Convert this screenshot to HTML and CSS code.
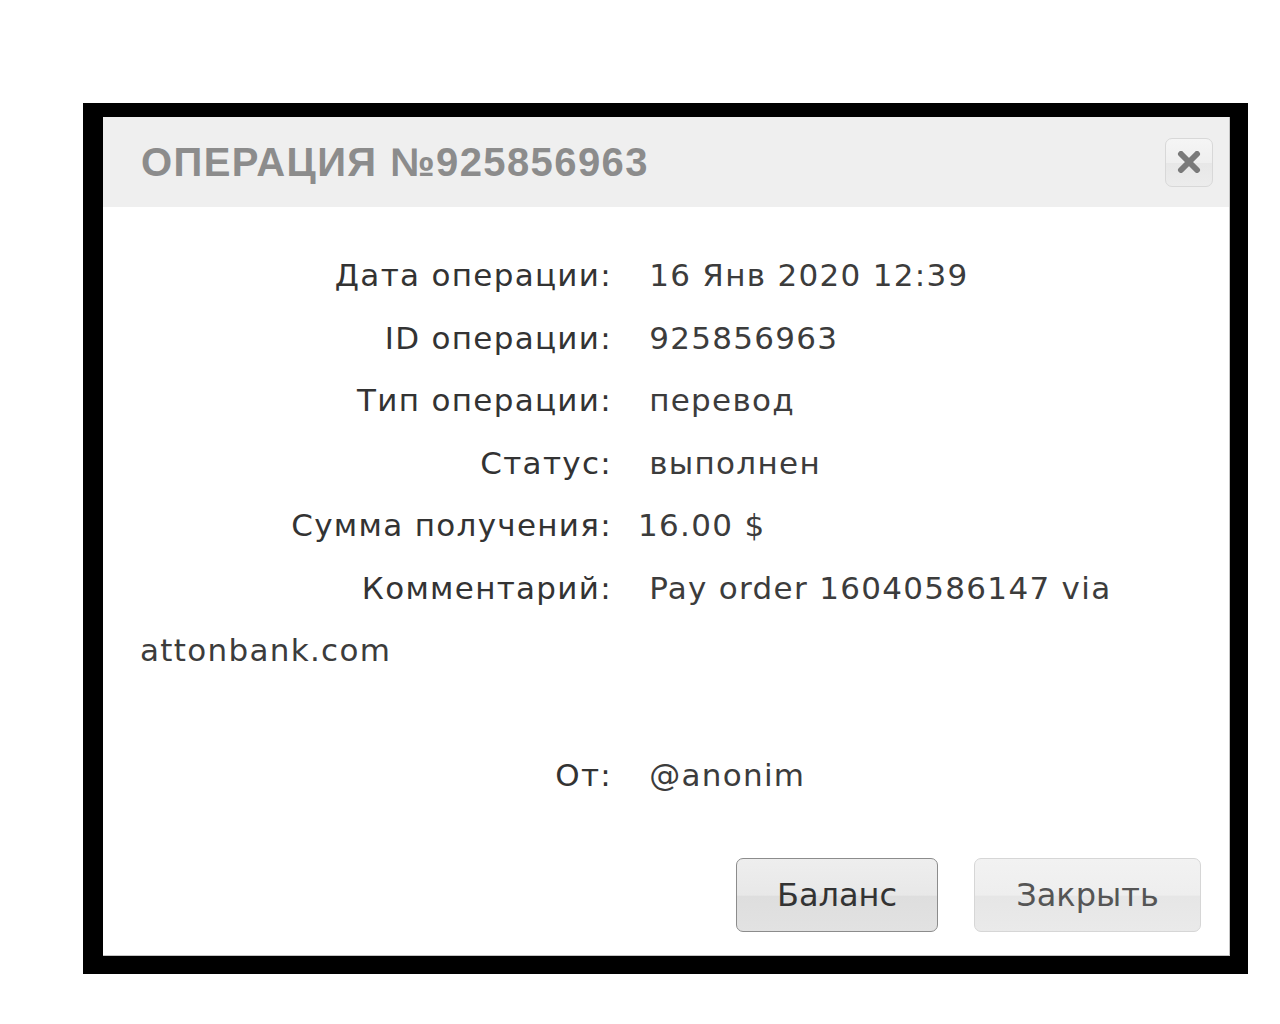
FILE: index.html
```html
<!DOCTYPE html>
<html lang="ru">
<head>
    <meta charset="UTF-8">
    <title>Операция №925856963</title>
    <link rel="stylesheet" href="styles.css">
</head>
<body>
  <div class="frame">
    <div class="dialog">
      <div class="dialog-head">
        <h2>ОПЕРАЦИЯ №925856963</h2>
        <button class="close-btn" title="Закрыть">
          <svg width="24" height="22" viewBox="0 0 24 22">
            <path d="M4 3 L20 19 M20 3 L4 19" stroke="#7a7a7a" stroke-width="6" stroke-linecap="round"/>
          </svg>
        </button>
      </div>

      <div class="dialog-body">
        <div class="row"><span class="label">Дата операции:</span> <span class="value">16 Янв 2020 12:39</span></div>
        <div class="row"><span class="label">ID операции:</span> <span class="value">925856963</span></div>
        <div class="row"><span class="label">Тип операции:</span> <span class="value">перевод</span></div>
        <div class="row"><span class="label">Статус:</span> <span class="value">выполнен</span></div>
        <div class="row"><span class="label">Сумма получения:</span><span class="value">16.00 $</span></div>
        <div class="row"><span class="label">Комментарий:</span> <span class="value">Pay order 16040586147 via attonbank.com</span></div>
        <div class="row spacer"></div>
        <div class="row"><span class="label">От:</span> <span class="value">@anonim</span></div>
      </div>

      <div class="dialog-foot">
        <button class="btn btn-main">Баланс</button>
        <button class="btn">Закрыть</button>
      </div>
    </div>
  </div>
</body>
</html>
```

FILE: styles.css
```css
body {
  margin: 0;
  padding: 0;
  background-color: #fff;
  font-family: "DejaVu Sans", sans-serif;
  color: #333;
}

.frame {
  margin: 103px 0 0 83px;
  width: 1165px;
  box-sizing: border-box;
  background-color: #000;
  padding: 14px 18px 18px 20px;
}

.dialog {
  background: #fff;
  border-right: 1px solid #c4c4c4;
  border-bottom: 1px solid #c4c4c4;
}

.dialog-head {
  background-color: #efefef;
  height: 90px;
  display: flex;
  align-items: center;
  justify-content: space-between;
  padding: 0 16px 0 38px;
}

.dialog-head h2 {
  margin: 0;
  font-family: "Liberation Sans", sans-serif;
  font-weight: bold;
  font-size: 40px;
  letter-spacing: 1.4px;
  color: #8c8c8c;
}

.close-btn {
  width: 48px;
  height: 49px;
  border: 1px solid #d8d8d8;
  border-radius: 7px;
  background: linear-gradient(#f5f5f5 0%, #efefef 50%, #e7e7e7 50%, #ececec 100%);
  display: flex;
  align-items: center;
  justify-content: center;
  padding: 0;
  cursor: pointer;
}

.dialog-body {
  padding: 37px 40px 0 37px;
  font-size: 31px;
  line-height: 62.5px;
  letter-spacing: 1.3px;
}

.row {
  color: #333;
}

.row.spacer {
  height: 62.5px;
}

.label {
  display: inline-block;
  width: 472px;
  text-align: right;
  margin-right: 26px;
}

.value {
  color: #3c3c3c;
}

.dialog-foot {
  display: flex;
  justify-content: flex-end;
  gap: 36px;
  padding: 51px 28px 23px 0;
}

.btn {
  height: 74px;
  min-width: 227px;
  padding: 0 30px;
  font-family: "DejaVu Sans", sans-serif;
  font-size: 32px;
  color: #555;
  border: 1px solid #d6d6d6;
  border-radius: 7px;
  background: linear-gradient(#f2f2f2 0%, #eeeeee 50%, #e6e6e6 52%, #eaeaea 100%);
  cursor: pointer;
}

.btn-main {
  min-width: 202px;
  color: #333;
  border-color: #8c8c8c;
  background: linear-gradient(#eeeeee 0%, #e8e8e8 50%, #dedede 52%, #e2e2e2 100%);
}
```
